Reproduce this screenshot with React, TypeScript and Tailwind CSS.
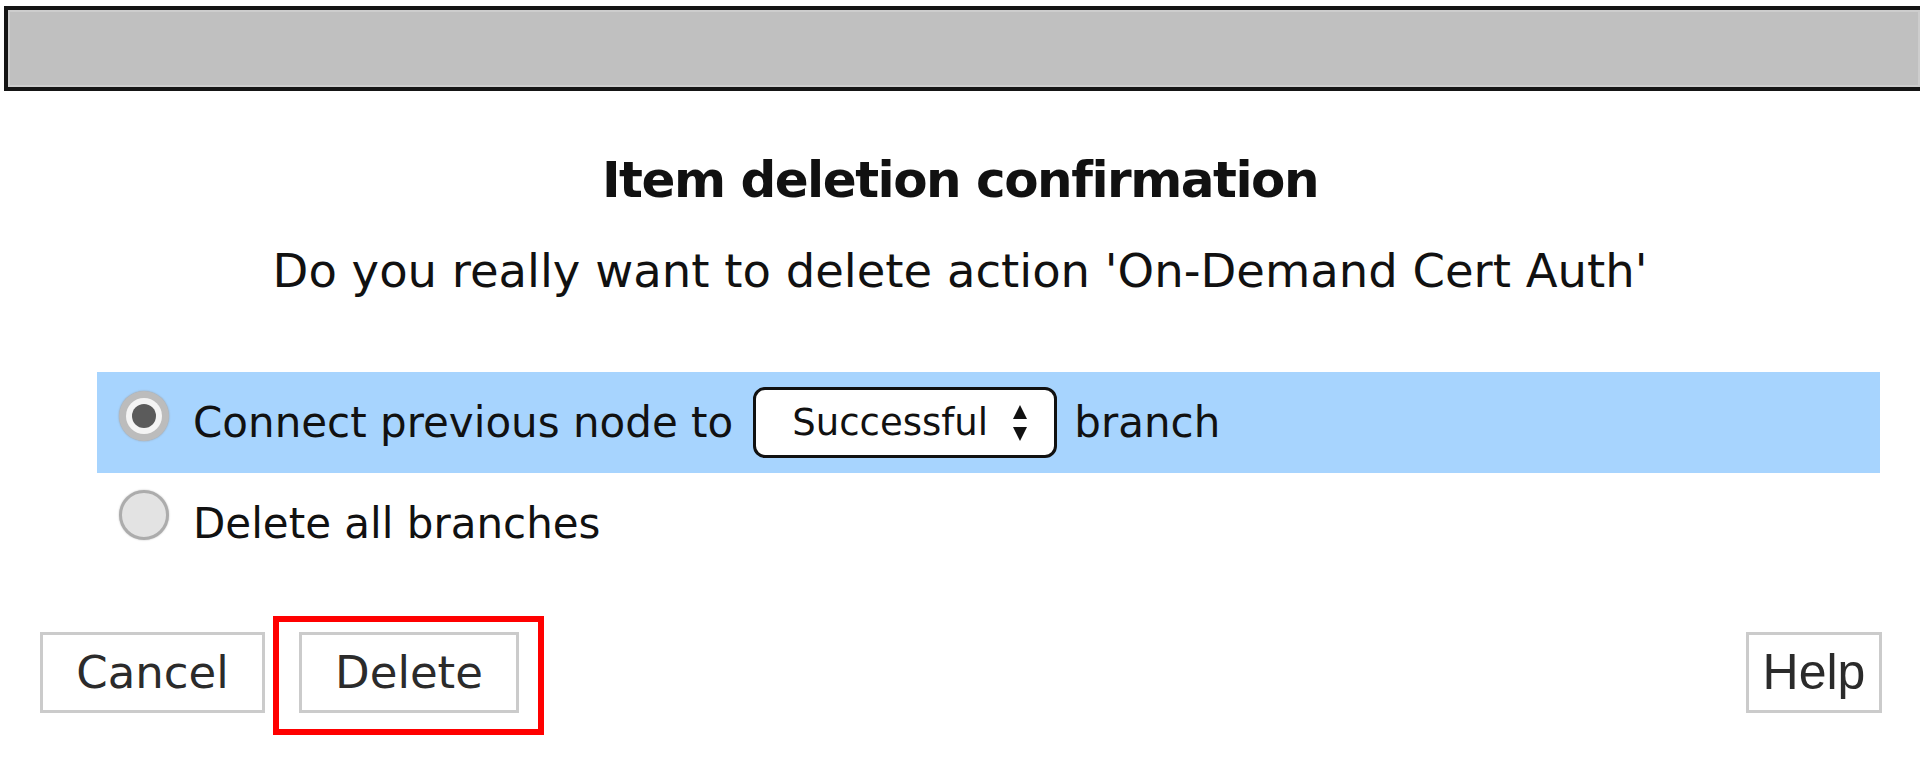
import React from 'react'

function RadioChecked() {
  return (
    <div className="mb-[14px] flex h-[50px] w-[50px] shrink-0 items-center justify-center rounded-full bg-[#bcbcbc] shadow-[0_0_2px_#999]">
      <div className="flex h-[36px] w-[36px] items-center justify-center rounded-full bg-[#f4f4f4]">
        <div className="h-[24px] w-[24px] rounded-full bg-[#5b5b5b]" />
      </div>
    </div>
  )
}

function RadioEmpty() {
  return (
    <div className="mb-[18px] h-[50px] w-[50px] shrink-0 rounded-full border-[3px] border-[#acacac] bg-[#e3e3e3] shadow-[0_0_2px_#bbb]" />
  )
}

export default function App() {
  return (
    <div className="relative h-[779px] w-[1920px] overflow-hidden bg-white font-['DejaVu_Sans',sans-serif] text-[#111]">
      {/* header strip */}
      <div className="ml-[4px] mt-[6px] h-[85px] border-y-[4px] border-l-[4px] border-[#151515] bg-[#c0c0c0] shadow-[inset_0_0_0_2px_#cdcdcd]" />

      <h1 className="mt-[59px] text-center text-[50px] font-bold leading-[60px] tracking-[-1.5px]">
        Item deletion confirmation
      </h1>
      <p className="mt-[33px] text-center text-[46.5px] leading-[56px]">
        Do you really want to delete action 'On-Demand Cert Auth'
      </p>

      <div className="ml-[97px] mr-[40px] mt-[73px] flex h-[101px] items-center bg-[#a7d4fe] pl-[22px]">
        <RadioChecked />
        <span className="ml-[24px] text-[42px] leading-[50px]">Connect previous node to</span>
        <div className="ml-[20px] flex h-[71px] w-[304px] items-center rounded-[12px] border-[3px] border-[#111] bg-white pl-[36px]">
          <span className="text-[37px] leading-[44px]">Successful</span>
          <svg className="ml-[24px]" width="16" height="40" viewBox="0 0 16 40">
            <path d="M8 2 L15 16 L1 16 Z" fill="#111" />
            <path d="M8 38 L15 24 L1 24 Z" fill="#111" />
          </svg>
        </div>
        <span className="ml-[17px] text-[42px] leading-[50px]">branch</span>
      </div>

      <div className="ml-[97px] flex h-[102px] items-center pl-[22px]">
        <RadioEmpty />
        <span className="ml-[24px] text-[42px] leading-[50px]">Delete all branches</span>
      </div>

      <div className="mt-[57px] flex px-[40px]">
        <button className="h-[81px] w-[225px] border-[3px] border-[#cbcbcb] bg-white text-[45px] text-[#2b2b2b]">
          Cancel
        </button>
        <button className="ml-[34px] h-[81px] w-[220px] border-[3px] border-[#cbcbcb] bg-white text-[45px] text-[#2b2b2b]">
          Delete
        </button>
        <button className="ml-auto mr-[-2px] h-[81px] w-[136px] border-[3px] border-[#cbcbcb] bg-white font-['Liberation_Sans',sans-serif] text-[50px] text-[#2b2b2b]">
          Help
        </button>
      </div>

      {/* annotation around Delete */}
      <div className="absolute left-[273px] top-[616px] h-[119px] w-[271px] border-[6px] border-[#ff0000]" />
    </div>
  )
}
